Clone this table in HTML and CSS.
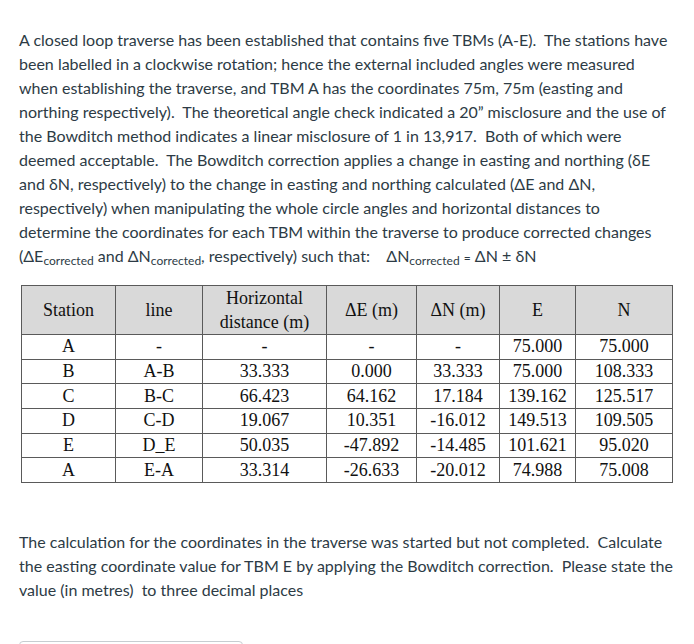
FILE: index.html
```html
<!DOCTYPE html>
<html>
<head>
<meta charset="utf-8">
<link rel="stylesheet" href="styles.css">
</head>
<body>
<div class="page">
  <p class="intro">A closed loop traverse has been established that contains five TBMs (A-E).&nbsp; The stations have been labelled in a clockwise rotation; hence the external included angles were measured when establishing the traverse, and TBM A has the coordinates 75m, 75m (easting and northing respectively).&nbsp; The theoretical angle check indicated a 20” misclosure and the use of the Bowditch method indicates a linear misclosure of 1 in 13,917.&nbsp; Both of which were deemed acceptable.&nbsp; The Bowditch correction applies a change in easting and northing (δE and δN, respectively) to the change in easting and northing calculated (ΔE and ΔN, respectively) when manipulating the whole circle angles and horizontal distances to determine the coordinates for each TBM within the traverse to produce corrected changes (ΔE<sub>corrected</sub> and ΔN<sub>corrected</sub>, respectively) such that:&nbsp;&nbsp;&nbsp; ΔN<sub>corrected</sub> <span class="eq">=</span> ΔN ± δN</p>

  <table class="data">
    <colgroup>
      <col class="c1"><col class="c2"><col class="c3"><col class="c4"><col class="c5"><col class="c6"><col class="c7">
    </colgroup>
    <thead>
      <tr><th>Station</th><th>line</th><th>Horizontal<br>distance (m)</th><th>ΔE (m)</th><th>ΔN (m)</th><th>E</th><th>N</th></tr>
    </thead>
    <tbody>
      <tr><td>A</td><td>-</td><td>-</td><td>-</td><td>-</td><td>75.000</td><td>75.000</td></tr>
      <tr><td>B</td><td>A-B</td><td>33.333</td><td>0.000</td><td>33.333</td><td>75.000</td><td>108.333</td></tr>
      <tr><td>C</td><td>B-C</td><td>66.423</td><td>64.162</td><td>17.184</td><td>139.162</td><td>125.517</td></tr>
      <tr><td>D</td><td>C-D</td><td>19.067</td><td>10.351</td><td>-16.012</td><td>149.513</td><td>109.505</td></tr>
      <tr><td>E</td><td>D_E</td><td>50.035</td><td>-47.892</td><td>-14.485</td><td>101.621</td><td>95.020</td></tr>
      <tr><td>A</td><td>E-A</td><td>33.314</td><td>-26.633</td><td>-20.012</td><td>74.988</td><td>75.008</td></tr>
    </tbody>
  </table>

  <p class="question">The calculation for the coordinates in the traverse was started but not completed.&nbsp; Calculate the easting coordinate value for TBM E by applying the Bowditch correction.&nbsp; Please state the value (in metres)&nbsp; to three decimal places</p>

  <div class="answer"><input class="answer-input" type="text"></div>
</div>
</body>
</html>
```

FILE: styles.css
```css
html, body {
  margin: 0;
  padding: 0;
  background: #ffffff;
}

.page {
  padding: 28px 19px 0 19px;
  font-family: Lato, "Open Sans", sans-serif;
  font-size: 16px;
  line-height: 24px;
  color: #2d3b45;
}

.intro {
  margin: 0;
  width: 652px;
}

.intro sub {
  font-size: 12px;
  line-height: 0;
  vertical-align: -3px;
}

.eq {
  font-size: 12px;
}

.data {
  margin: 15px 0 0 2px;
  border-collapse: collapse;
  table-layout: fixed;
  width: 652px;
  font-family: "Liberation Serif", "Times New Roman", serif;
  font-size: 18px;
  color: #111;
}

.c1 { width: 94px; }
.c2 { width: 87px; }
.c3 { width: 124px; }
.c4 { width: 90px; }
.c5 { width: 83px; }
.c6 { width: 76px; }
.c7 { width: 97px; }

.data th,
.data td {
  border: 1px solid #5a5a5a;
  text-align: center;
  padding: 0;
  overflow: hidden;
  white-space: nowrap;
}

.data th {
  background: #d9d9d9;
  font-weight: normal;
  height: 48px;
  line-height: 24px;
}

.data td {
  height: 23.7px;
  line-height: 23px;
}

.question {
  margin: 47px 0 0 0;
  width: 656px;
  font-size: 16px;
}

.answer {
  margin-top: 39px;
}

.answer-input {
  display: block;
  box-sizing: border-box;
  width: 224px;
  height: 36px;
  margin: 0;
  border: 1px solid #c7cdd1;
  border-radius: 4px;
  background: #fff;
}
```
